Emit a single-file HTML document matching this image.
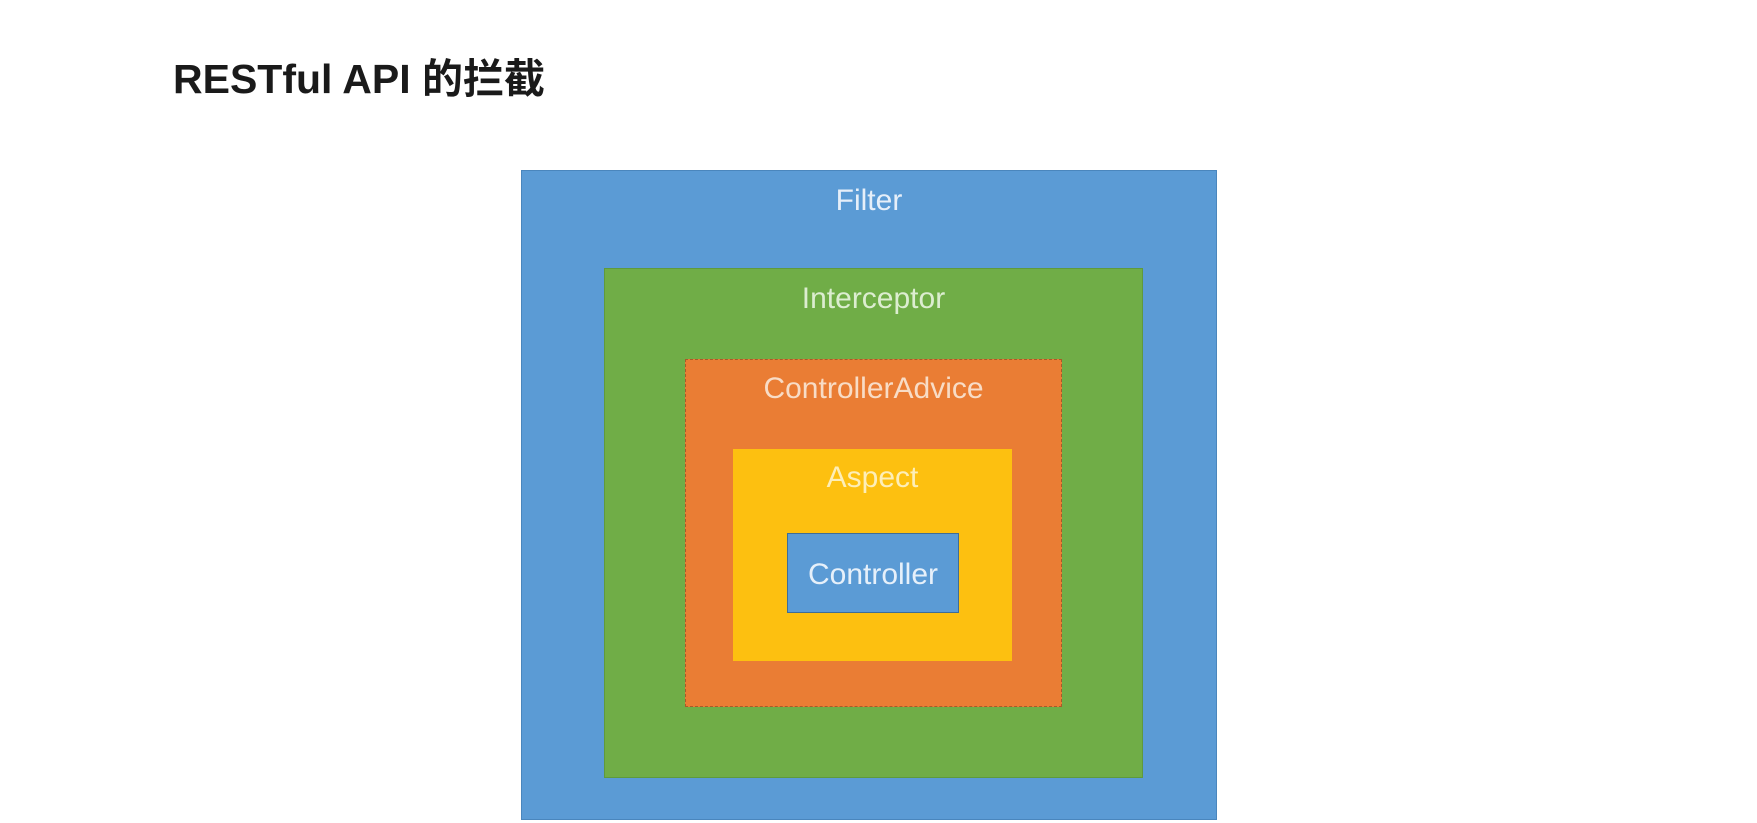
<!DOCTYPE html>
<html><head><meta charset="utf-8"><style>
body{margin:0;width:1757px;height:823px;background:#fff;position:relative;overflow:hidden;font-family:"Liberation Sans","Noto Sans CJK SC",sans-serif}
.t{position:absolute;left:173px;top:45px;font-size:41px;font-weight:bold;color:#1a1a1a;letter-spacing:0}
.b{position:absolute;box-sizing:border-box}
.l{position:absolute;left:0;right:0;text-align:center;font-size:30px;line-height:34px}
</style></head><body>
<div class="t">RESTful API 的拦截</div>
<div class="b" style="left:521px;top:170px;width:696px;height:650px;background:#5b9bd5;border:1px solid #4a86bd"></div>
<div class="l" style="left:521px;width:696px;top:184px;color:#e6eff9">Filter</div>
<div class="b" style="left:604px;top:268px;width:539px;height:510px;background:#70ad47;border:1px solid #5f9a3c"></div>
<div class="l" style="left:604px;width:539px;top:282px;color:#dcedd0">Interceptor</div>
<div class="b" style="left:685px;top:359px;width:377px;height:348px;background:#ea7d34;border:1.5px dashed #a85a2a"></div>
<div class="l" style="left:685px;width:377px;top:372px;color:#f8dcc6">ControllerAdvice</div>
<div class="b" style="left:733px;top:449px;width:279px;height:212px;background:#fdc010"></div>
<div class="l" style="left:733px;width:279px;top:461px;color:#fdeeb8">Aspect</div>
<div class="b" style="left:787px;top:533px;width:172px;height:80px;background:#5b9bd5;border:1.5px solid #3f6d96"></div>
<div class="l" style="left:787px;width:172px;top:558px;color:#e6f0fa">Controller</div>
</body></html>
